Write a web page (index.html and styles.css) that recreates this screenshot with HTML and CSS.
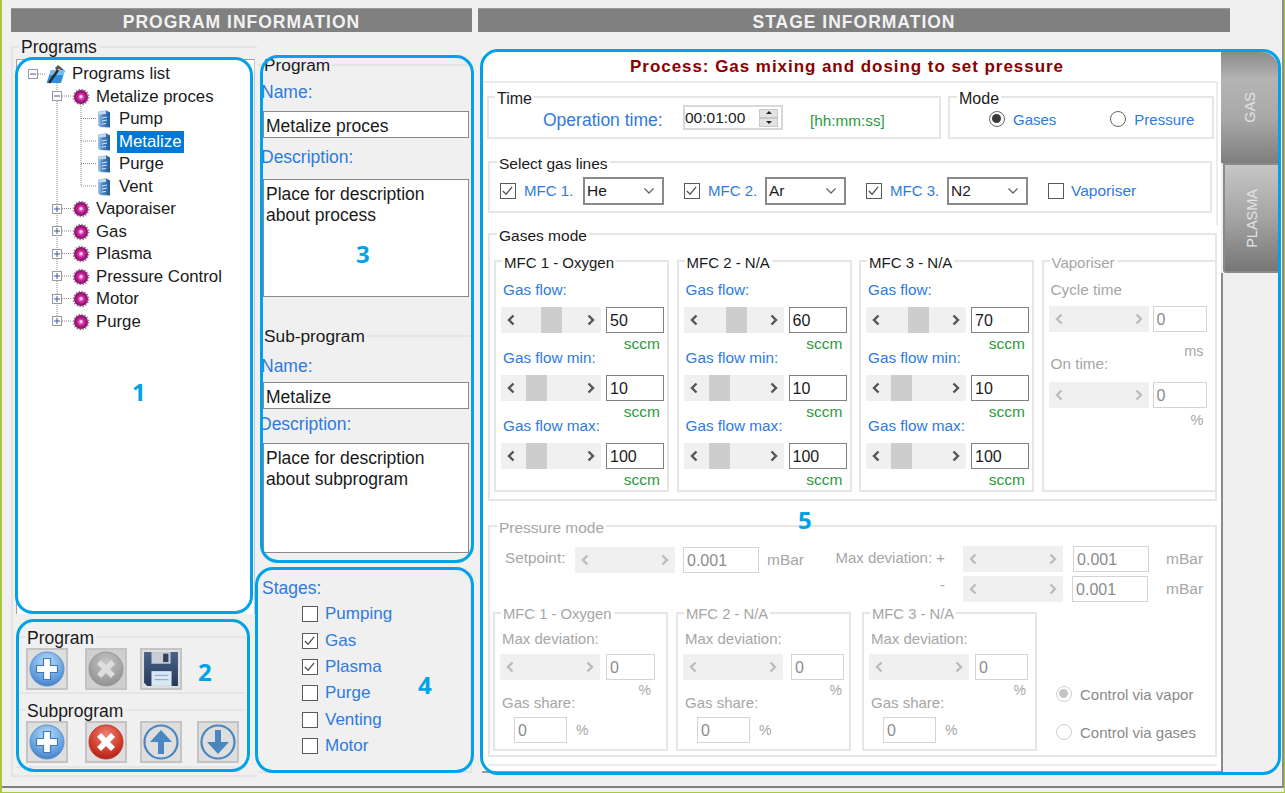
FILE: index.html

```html
<!DOCTYPE html>
<html lang="en">
<head>
    <meta charset="UTF-8">
    <title>Program information</title>
    <link rel="stylesheet" href="styles.css">
</head>
<body>

<svg class="defs" width="0" height="0">
    <defs>
        <radialGradient id="gBlue" cx="50%" cy="30%" r="75%">
            <stop offset="0" stop-color="#bcdcf8"/><stop offset="0.6" stop-color="#6fa8e0"/><stop offset="1" stop-color="#3c78c4"/>
        </radialGradient>
        <radialGradient id="gGrey" cx="50%" cy="30%" r="75%">
            <stop offset="0" stop-color="#c4c4c4"/><stop offset="1" stop-color="#8e8e8e"/>
        </radialGradient>
        <radialGradient id="gRed" cx="50%" cy="30%" r="75%">
            <stop offset="0" stop-color="#ee8474"/><stop offset="0.6" stop-color="#d2402f"/><stop offset="1" stop-color="#a81c14"/>
        </radialGradient>
        <radialGradient id="gGear" cx="50%" cy="50%" r="55%">
            <stop offset="0" stop-color="#f8a8d8"/><stop offset="0.45" stop-color="#c8209a"/><stop offset="1" stop-color="#6c0c50"/>
        </radialGradient>
        <linearGradient id="gDoc" x1="0" y1="0" x2="1" y2="0">
            <stop offset="0" stop-color="#a9c8ea"/><stop offset="0.4" stop-color="#4a86c6"/><stop offset="1" stop-color="#1f5a9e"/>
        </linearGradient>
        <linearGradient id="gFloppy" x1="0" y1="0" x2="0" y2="1">
            <stop offset="0" stop-color="#4a6288"/><stop offset="1" stop-color="#27395c"/>
        </linearGradient>

        <symbol id="i-gear" viewBox="0 0 18 18">
            <circle cx="9" cy="9" r="7.6" fill="none" stroke="#8a7a86" stroke-width="1.4" stroke-dasharray="1.4 1.6"/>
            <circle cx="9" cy="9" r="7" fill="url(#gGear)"/>
            <circle cx="9" cy="8.4" r="1.5" fill="#fbd0ea"/>
        </symbol>
        <symbol id="i-doc" viewBox="0 0 14 18">
            <path d="M1 1.5 L9.5 0.5 L13 2.5 L13 17.5 L3 17 L1 15.5 Z" fill="url(#gDoc)"/>
            <path d="M2 1.5 L9 1 L9 4 L2 4.5 Z" fill="#c4d8f0"/>
            <path d="M5 8 L10 7 M5 11 L10 10 M5 14 L9 13.5" stroke="#d6e6f6" stroke-width="1" fill="none"/>
        </symbol>
        <symbol id="i-root" viewBox="0 0 20 20">
            <path d="M5 6 L19 6 L15 19 L0.5 19 Z" fill="#2f8fe0"/>
            <path d="M5 6 L19 6 L17.5 11 L3 11 Z" fill="#74bdf2"/>
            <path d="M3 19 L12 6" stroke="#2a2a2a" stroke-width="2.4"/>
            <path d="M9 4 L12 1 L18 6 L15 6 L12 5 L11 7 Z" fill="#555"/>
        </symbol>
        <symbol id="i-plus" viewBox="0 0 36 36">
            <circle cx="18" cy="18" r="17" fill="url(#gBlue)" stroke="#5a94d4" stroke-width="1"/>
            <path d="M14.5 7.5 H21.5 V14.5 H28.5 V21.5 H21.5 V28.5 H14.5 V21.5 H7.5 V14.5 H14.5 Z" fill="#fff" stroke="#3f78bc" stroke-width="1.2"/>
        </symbol>
        <symbol id="i-cross-off" viewBox="0 0 36 36">
            <circle cx="18" cy="18" r="17" fill="url(#gGrey)" stroke="#9a9a9a" stroke-width="1"/>
            <path d="M13 9 L18 14 L23 9 L27 13 L22 18 L27 23 L23 27 L18 22 L13 27 L9 23 L14 18 L9 13 Z" fill="#dedede"/>
        </symbol>
        <symbol id="i-cross" viewBox="0 0 36 36">
            <circle cx="18" cy="18" r="17" fill="url(#gRed)" stroke="#c03a2c" stroke-width="1"/>
            <path d="M13 9 L18 14 L23 9 L27 13 L22 18 L27 23 L23 27 L18 22 L13 27 L9 23 L14 18 L9 13 Z" fill="#fff"/>
        </symbol>
        <symbol id="i-floppy" viewBox="0 0 34 34">
            <path d="M1 1 H33 V33 H4 L1 30 Z" fill="url(#gFloppy)"/>
            <rect x="8" y="1" width="18" height="11" fill="#c9ced6"/>
            <rect x="19" y="2.5" width="5" height="8" fill="#33425e"/>
            <rect x="8" y="19" width="19" height="14" fill="#dbe8f4"/>
            <path d="M11 23 H24 M11 27 H24" stroke="#8fb0d0" stroke-width="1.2"/>
        </symbol>
        <symbol id="i-up" viewBox="0 0 36 36">
            <circle cx="18" cy="18" r="16.5" fill="none" stroke="#4a86c0" stroke-width="2.2"/>
            <path d="M18 6 L29 18 H21 V30 H15 V18 H7 Z" fill="#4a86c0"/>
        </symbol>
        <symbol id="i-down" viewBox="0 0 36 36">
            <circle cx="18" cy="18" r="16.5" fill="none" stroke="#4a86c0" stroke-width="2.2"/>
            <path d="M18 30 L29 18 H21 V6 H15 V18 H7 Z" fill="#4a86c0"/>
        </symbol>
        <symbol id="i-tick" viewBox="0 0 14 14">
            <path d="M2 7.5 L5.5 11 L12 3" fill="none" stroke="#555" stroke-width="1.4"/>
        </symbol>
        <symbol id="i-chev" viewBox="0 0 12 8">
            <path d="M1.5 1.5 L6 6 L10.5 1.5" fill="none" stroke="#666" stroke-width="1.3"/>
        </symbol>
        <symbol id="i-left" viewBox="0 0 8 12">
            <path d="M6.5 1.5 L2 6 L6.5 10.5" fill="none" stroke="currentColor" stroke-width="2.4"/>
        </symbol>
        <symbol id="i-right" viewBox="0 0 8 12">
            <path d="M1.5 1.5 L6 6 L1.5 10.5" fill="none" stroke="currentColor" stroke-width="2.4"/>
        </symbol>
    </defs>
</svg>

<div class="window">
<div class="frame">

    <div class="heads">
        <h2 class="head">PROGRAM INFORMATION</h2>
        <h2 class="head">STAGE INFORMATION</h2>
    </div>

    <div class="main">

        <div class="left">
            <fieldset class="programs">
                <legend>Programs</legend>
                <div class="tree">
                    <svg class="tree-lines" width="120" height="300">
                        <g fill="none" stroke="#8a8a8a" stroke-dasharray="1 1">
                            <path d="M22 15 H30 M41 20 V262 M46 37 H56 M65 47 V127 M65 59.5 H80 M65 82 H80 M65 104.5 H80 M65 127 H80"/>
                            <path d="M46 149.5 H56 M46 172 H56 M46 194.5 H56 M46 217 H56 M46 239.5 H56 M46 262 H56"/>
                        </g>
                        <g fill="#fff" stroke="#9a9a9a">
                            <rect x="12.5" y="10.5" width="9" height="9"/>
                            <rect x="36.5" y="32.5" width="9" height="9"/>
                            <rect x="36.5" y="145.5" width="9" height="9"/>
                            <rect x="36.5" y="167.5" width="9" height="9"/>
                            <rect x="36.5" y="190.5" width="9" height="9"/>
                            <rect x="36.5" y="212.5" width="9" height="9"/>
                            <rect x="36.5" y="235.5" width="9" height="9"/>
                            <rect x="36.5" y="257.5" width="9" height="9"/>
                        </g>
                        <path d="M14 15 H20 M38 37 H44" stroke="#3c5a9a"/>
                        <path d="M38 150 H44 M41 147 V153 M38 172 H44 M41 169 V175 M38 195 H44 M41 192 V198 M38 217 H44 M41 214 V220 M38 240 H44 M41 237 V243 M38 262 H44 M41 259 V265" stroke="#3c5a9a"/>
                    </svg>
                    <div class="node lvl0"><svg class="ico"><use href="#i-root"/></svg><span>Programs list</span></div>
                    <div class="node lvl1"><svg class="ico"><use href="#i-gear"/></svg><span>Metalize proces</span></div>
                    <div class="node lvl2"><svg class="ico"><use href="#i-doc"/></svg><span>Pump</span></div>
                    <div class="node lvl2"><svg class="ico"><use href="#i-doc"/></svg><span class="selected">Metalize</span></div>
                    <div class="node lvl2"><svg class="ico"><use href="#i-doc"/></svg><span>Purge</span></div>
                    <div class="node lvl2"><svg class="ico"><use href="#i-doc"/></svg><span>Vent</span></div>
                    <div class="node lvl1"><svg class="ico"><use href="#i-gear"/></svg><span>Vaporaiser</span></div>
                    <div class="node lvl1"><svg class="ico"><use href="#i-gear"/></svg><span>Gas</span></div>
                    <div class="node lvl1"><svg class="ico"><use href="#i-gear"/></svg><span>Plasma</span></div>
                    <div class="node lvl1"><svg class="ico"><use href="#i-gear"/></svg><span>Pressure Control</span></div>
                    <div class="node lvl1"><svg class="ico"><use href="#i-gear"/></svg><span>Motor</span></div>
                    <div class="node lvl1"><svg class="ico"><use href="#i-gear"/></svg><span>Purge</span></div>
                </div>

                <fieldset class="tools first">
                    <legend>Program</legend>
                    <div class="tool-row">
                        <button class="tool"><svg><use href="#i-plus"/></svg></button>
                        <button class="tool off"><svg><use href="#i-cross-off"/></svg></button>
                        <button class="tool"><svg><use href="#i-floppy"/></svg></button>
                    </div>
                </fieldset>
                <fieldset class="tools">
                    <legend>Subprogram</legend>
                    <div class="tool-row">
                        <button class="tool"><svg><use href="#i-plus"/></svg></button>
                        <button class="tool"><svg><use href="#i-cross"/></svg></button>
                        <button class="tool"><svg><use href="#i-up"/></svg></button>
                        <button class="tool"><svg><use href="#i-down"/></svg></button>
                    </div>
                </fieldset>
            </fieldset>
        </div>

        <div class="mid">
            <fieldset class="info">
                <legend>Program</legend>
                <div class="lbl name">Name:</div>
                <input class="field" type="text" value="Metalize proces">
                <div class="lbl desc">Description:</div>
                <textarea class="memo">Place for description about process</textarea>
            </fieldset>
            <fieldset class="info sub">
                <legend>Sub-program</legend>
                <div class="lbl name">Name:</div>
                <input class="field" type="text" value="Metalize">
                <div class="lbl desc shifted">Description:</div>
                <textarea class="memo short">Place for description about subprogram</textarea>
            </fieldset>
            <div class="stages">
                <div class="lbl">Stages:</div>
                <ul class="stage-list">
                    <li><span class="check"></span>Pumping</li>
                    <li><span class="check"><svg><use href="#i-tick"/></svg></span>Gas</li>
                    <li><span class="check"><svg><use href="#i-tick"/></svg></span>Plasma</li>
                    <li><span class="check"></span>Purge</li>
                    <li><span class="check"></span>Venting</li>
                    <li><span class="check"></span>Motor</li>
                </ul>
            </div>
        </div>

        <div class="stage-wrap">
            <div class="stage">
                <div class="title">Process: Gas mixing and dosing to set pressure</div>
                <div class="stage-top">
                    <div class="top-row">
                        <fieldset class="box time">
                            <legend>Time</legend>
                            <div class="time-row">
                                <span class="lbl op">Operation time:</span>
                                <div class="spin">
                                    <span>00:01:00</span>
                                    <div class="spin-btns"><i class="up"></i><i class="dn"></i></div>
                                </div>
                                <span class="hint">[hh:mm:ss]</span>
                            </div>
                        </fieldset>
                        <fieldset class="box mode">
                            <legend>Mode</legend>
                            <div class="mode-row">
                                <span class="radio on"></span><span class="lbl opt">Gases</span>
                                <span class="radio second"></span><span class="lbl opt">Pressure</span>
                            </div>
                        </fieldset>
                    </div>
                    <fieldset class="box lines">
                        <legend>Select gas lines</legend>
                        <div class="lines-row">
                            <div class="gas-line"><span class="check"><svg><use href="#i-tick"/></svg></span><span class="lbl">MFC 1.</span><div class="combo">He<svg><use href="#i-chev"/></svg></div></div>
                            <div class="gas-line"><span class="check"><svg><use href="#i-tick"/></svg></span><span class="lbl">MFC 2.</span><div class="combo">Ar<svg><use href="#i-chev"/></svg></div></div>
                            <div class="gas-line"><span class="check"><svg><use href="#i-tick"/></svg></span><span class="lbl">MFC 3.</span><div class="combo">N2<svg><use href="#i-chev"/></svg></div></div>
                            <div class="gas-line vap"><span class="check"></span><span class="lbl">Vaporiser</span></div>
                        </div>
                    </fieldset>
                </div>

                <fieldset class="box gases">
                    <legend>Gases mode</legend>
                    <div class="mfc-row">
                        <fieldset class="box mfc">
                            <legend>MFC 1 - Oxygen</legend>
                            <div class="ctl"><div class="lbl">Gas flow:</div><div class="ctl-row"><div class="scroll"><svg class="arr"><use href="#i-left"/></svg><b style="left:40px"></b><svg class="arr"><use href="#i-right"/></svg></div><input class="val" value="50"></div><div class="unit">sccm</div></div>
                            <div class="ctl"><div class="lbl">Gas flow min:</div><div class="ctl-row"><div class="scroll"><svg class="arr"><use href="#i-left"/></svg><b style="left:25px"></b><svg class="arr"><use href="#i-right"/></svg></div><input class="val" value="10"></div><div class="unit">sccm</div></div>
                            <div class="ctl"><div class="lbl">Gas flow max:</div><div class="ctl-row"><div class="scroll"><svg class="arr"><use href="#i-left"/></svg><b style="left:25px"></b><svg class="arr"><use href="#i-right"/></svg></div><input class="val" value="100"></div><div class="unit">sccm</div></div>
                        </fieldset>
                        <fieldset class="box mfc">
                            <legend>MFC 2 - N/A</legend>
                            <div class="ctl"><div class="lbl">Gas flow:</div><div class="ctl-row"><div class="scroll"><svg class="arr"><use href="#i-left"/></svg><b style="left:42px"></b><svg class="arr"><use href="#i-right"/></svg></div><input class="val" value="60"></div><div class="unit">sccm</div></div>
                            <div class="ctl"><div class="lbl">Gas flow min:</div><div class="ctl-row"><div class="scroll"><svg class="arr"><use href="#i-left"/></svg><b style="left:25px"></b><svg class="arr"><use href="#i-right"/></svg></div><input class="val" value="10"></div><div class="unit">sccm</div></div>
                            <div class="ctl"><div class="lbl">Gas flow max:</div><div class="ctl-row"><div class="scroll"><svg class="arr"><use href="#i-left"/></svg><b style="left:25px"></b><svg class="arr"><use href="#i-right"/></svg></div><input class="val" value="100"></div><div class="unit">sccm</div></div>
                        </fieldset>
                        <fieldset class="box mfc">
                            <legend>MFC 3 - N/A</legend>
                            <div class="ctl"><div class="lbl">Gas flow:</div><div class="ctl-row"><div class="scroll"><svg class="arr"><use href="#i-left"/></svg><b style="left:42px"></b><svg class="arr"><use href="#i-right"/></svg></div><input class="val" value="70"></div><div class="unit">sccm</div></div>
                            <div class="ctl"><div class="lbl">Gas flow min:</div><div class="ctl-row"><div class="scroll"><svg class="arr"><use href="#i-left"/></svg><b style="left:25px"></b><svg class="arr"><use href="#i-right"/></svg></div><input class="val" value="10"></div><div class="unit">sccm</div></div>
                            <div class="ctl"><div class="lbl">Gas flow max:</div><div class="ctl-row"><div class="scroll"><svg class="arr"><use href="#i-left"/></svg><b style="left:25px"></b><svg class="arr"><use href="#i-right"/></svg></div><input class="val" value="100"></div><div class="unit">sccm</div></div>
                        </fieldset>
                        <fieldset class="box mfc vaporiser off">
                            <legend>Vaporiser</legend>
                            <div class="ctl tall"><div class="lbl">Cycle time</div><div class="ctl-row"><div class="scroll"><svg class="arr"><use href="#i-left"/></svg><svg class="arr"><use href="#i-right"/></svg></div><input class="val" value="0"></div><div class="unit low">ms</div></div>
                            <div class="ctl"><div class="lbl">On time:</div><div class="ctl-row"><div class="scroll"><svg class="arr"><use href="#i-left"/></svg><svg class="arr"><use href="#i-right"/></svg></div><input class="val" value="0"></div><div class="unit">%</div></div>
                        </fieldset>
                    </div>
                </fieldset>

                <fieldset class="box pressure off">
                    <legend>Pressure mode</legend>
                    <div class="press-top">
                        <div class="press-set">
                            <span class="set-lbl">Setpoint:</span>
                            <div class="scroll"><svg class="arr"><use href="#i-left"/></svg><svg class="arr"><use href="#i-right"/></svg></div>
                            <input class="val wide" value="0.001">
                            <span class="mbar">mBar</span>
                        </div>
                        <div class="press-dev">
                            <div class="dev-line"><span class="dev-lbl">Max deviation: +</span><div class="scroll"><svg class="arr"><use href="#i-left"/></svg><svg class="arr"><use href="#i-right"/></svg></div><input class="val wide" value="0.001"><span class="mbar">mBar</span></div>
                            <div class="dev-line minus"><span class="dev-lbl">-</span><div class="scroll"><svg class="arr"><use href="#i-left"/></svg><svg class="arr"><use href="#i-right"/></svg></div><input class="val wide" value="0.001"><span class="mbar">mBar</span></div>
                        </div>
                    </div>
                    <div class="press-groups">
                        <fieldset class="box pmfc">
                            <legend>MFC 1 - Oxygen</legend>
                            <div class="lbl">Max deviation:</div>
                            <div class="ctl-row"><div class="scroll"><svg class="arr"><use href="#i-left"/></svg><svg class="arr"><use href="#i-right"/></svg></div><input class="val small" value="0"></div>
                            <div class="pct">%</div>
                            <div class="lbl">Gas share:</div>
                            <div class="share"><input class="val small" value="0"><span>%</span></div>
                        </fieldset>
                        <fieldset class="box pmfc">
                            <legend>MFC 2 - N/A</legend>
                            <div class="lbl">Max deviation:</div>
                            <div class="ctl-row"><div class="scroll"><svg class="arr"><use href="#i-left"/></svg><svg class="arr"><use href="#i-right"/></svg></div><input class="val small" value="0"></div>
                            <div class="pct">%</div>
                            <div class="lbl">Gas share:</div>
                            <div class="share"><input class="val small" value="0"><span>%</span></div>
                        </fieldset>
                        <fieldset class="box pmfc">
                            <legend>MFC 3 - N/A</legend>
                            <div class="lbl">Max deviation:</div>
                            <div class="ctl-row"><div class="scroll"><svg class="arr"><use href="#i-left"/></svg><svg class="arr"><use href="#i-right"/></svg></div><input class="val small" value="0"></div>
                            <div class="pct">%</div>
                            <div class="lbl">Gas share:</div>
                            <div class="share"><input class="val small" value="0"><span>%</span></div>
                        </fieldset>
                        <div class="controls">
                            <div class="ctrl"><span class="radio on"></span>Control via vapor</div>
                            <div class="ctrl"><span class="radio"></span>Control via gases</div>
                        </div>
                    </div>
                </fieldset>
                <div class="stage-end"></div>
            </div>

            <div class="tabs">
                <div class="tab gas"><span>GAS</span></div>
                <div class="tab plasma"><span>PLASMA</span></div>
                <div class="tab-rest"></div>
            </div>
        </div>
    </div>

    <!-- numbered callouts drawn over the screen -->
    <div class="callout c1"></div><div class="callout c2"></div><div class="callout c3"></div><div class="callout c4"></div><div class="callout c5"></div>
    <span class="num n1">1</span><span class="num n2">2</span><span class="num n3">3</span><span class="num n4">4</span><span class="num n5">5</span>

</div>
</div>

</body>
</html>
```

FILE: styles.css

```css
* {
    box-sizing: border-box;
}
html, body {
    margin: 0;
    padding: 0;
}
body {
    width: 1285px;
    height: 793px;
    overflow: hidden;
    background: #f0f0f0;
    font-family: "Liberation Sans", Arial, sans-serif;
    font-size: 15px;
    color: #1a1a1a;
}
.defs {
    position: absolute;
}
.window {
    height: 793px;
    border-left: 2px solid #a8c83e;
    border-right: 1px solid #a8c83e;
    border-bottom: 1px solid #a8c83e;
}
.frame {
    position: relative;
    height: 788px;
    border-right: 2px solid #8c8c8c;
    border-bottom: 2px solid #808080;
}
fieldset {
    margin: 0;
    padding: 0;
    min-width: 0;
}
legend {
    padding: 0 2px;
    height: 18px;
    line-height: 18px;
}

/* headers */
.heads {
    display: flex;
    gap: 6px;
    padding: 8px 0 0 9px;
}
.head {
    margin: 0;
    height: 24px;
    line-height: 27px;
    background: #808080;
    border-top: 1px solid #999;
    color: #f2f2f2;
    font-size: 17.5px;
    letter-spacing: 1px;
    text-align: center;
    overflow: hidden;
}
.head:first-child {
    width: 461px;
}
.head:last-child {
    width: 752px;
}

.main {
    display: flex;
    padding-left: 9px;
}

/* left column */
.left {
    width: 246px;
    margin-top: 6px;
    margin-right: 1px;
}
.programs {
    height: 739px;
    border: 2px solid #e4e4e4;
    border-right: 0;
    padding-left: 3px;
}
.programs > legend {
    margin-left: 3px;
    font-size: 17.5px;
}
.tree {
    position: relative;
    width: 239px;
    height: 555px;
    margin-top: 3px;
    padding-top: 3px;
    background: #fff;
    border-top: 1px solid #a0a0a0;
    border-left: 1px solid #a0a0a0;
    border-right: 1px solid #c8c8c8;
    font-size: 16.8px;
}
.tree-lines {
    position: absolute;
    left: -1px;
    top: -1px;
}
.node {
    position: relative;
    display: flex;
    align-items: center;
    height: 22.5px;
}
.lvl0 { padding-left: 29px; }
.lvl1 { padding-left: 55px; }
.lvl2 { padding-left: 80px; }
.ico {
    width: 18px;
    height: 18px;
    flex: none;
}
.lvl0 .ico { width: 20px; height: 20px; }
.lvl0 span { margin-left: 6px; }
.lvl1 span { margin-left: 6px; }
.lvl2 .ico { width: 14px; }
.lvl2 span { margin-left: 6px; padding: 0 2px; line-height: 22px; }
.selected {
    background: #0078d7;
    color: #fff;
}
.tools {
    width: 230px;
    border: 0;
    border-top: 2px solid #e6e6e6;
}
.tools > legend {
    margin-left: 9px;
    font-size: 17.5px;
    line-height: 20px;
}
.tools.first {
    margin-top: 14px;
    height: 66px;
    border-bottom: 2px solid #e6e6e6;
}
.tools:not(.first) {
    margin-top: 7px;
    height: 67px;
    border-bottom: 2px solid #e6e6e6;
}
.tool-row {
    display: flex;
    padding-left: 10px;
    margin-top: 2px;
}
.tool {
    display: flex;
    align-items: center;
    justify-content: center;
    width: 42px;
    height: 42px;
    padding: 0;
    background: #dedede;
    border: 2px solid #c4c4c4;
}
.tool.off {
    background: #cfcfcf;
}
.tool svg {
    width: 36px;
    height: 36px;
}
.tool:nth-child(2) { margin-left: 17px; }
.tool:nth-child(3) { margin-left: 13px; }
.tool:nth-child(4) { margin-left: 15px; }

/* middle column */
.mid {
    width: 214px;
    margin-top: 24px;
}
.lbl {
    color: #2f7ade;
    font-size: 15.5px;
    line-height: 18px;
}
.mid .lbl {
    font-size: 17.5px;
}
.info {
    height: 260px;
    border: 0;
    border-top: 2px solid #e4e4e4;
}
.info > legend {
    margin-left: 4px;
    font-size: 17.3px;
}
.info .lbl.name {
    margin: 9px 0 0 3px;
}
.info .lbl.desc {
    margin: 10px 0 0 3px;
}
.field {
    display: block;
    width: 206px;
    height: 27px;
    margin: 10px 0 0 5px;
    padding: 3px 2px 0;
    border: 1px solid #8a8a8a;
    background: #fff;
    font: 17.5px "Liberation Sans", Arial, sans-serif;
    color: #1a1a1a;
}
.memo {
    display: block;
    width: 206px;
    height: 118px;
    margin: 13px 0 0 5px;
    padding: 4px 30px 4px 2px;
    border: 1px solid #8a8a8a;
    background: #fff;
    resize: none;
    overflow: hidden;
    font: 17.5px/21px "Liberation Sans", Arial, sans-serif;
    color: #1a1a1a;
}
.sub {
    height: 244px;
    margin-top: 11px;
}
.sub .lbl.name {
    margin-top: 12px;
}
.sub .field {
    margin-top: 7px;
}
.sub .lbl.desc {
    margin-top: 6px;
}
.sub .lbl.shifted {
    margin-left: 1px;
}
.memo.short {
    height: 110px;
    margin-top: 10px;
}
.stages {
    height: 202px;
    padding: 8px 0 0 4px;
    border: 2px solid #e4e4e4;
    border-top: 0;
    border-left: 0;
}
.stage-list {
    list-style: none;
    margin: 4px 0 0;
    padding: 0 0 0 40px;
}
.stage-list li {
    display: flex;
    align-items: center;
    gap: 7px;
    height: 26.4px;
    color: #2f7ade;
    font-size: 17px;
}
.check {
    display: inline-flex;
    flex: none;
    width: 16px;
    height: 16px;
    background: #fff;
    border: 1.5px solid #5a5a5a;
}
.check svg {
    width: 13px;
    height: 13px;
}

/* stage panel */
.stage-wrap {
    display: flex;
    width: 798px;
    height: 721px;
    margin: 20px 0 0 10px;
}
.stage {
    width: 739px;
    background: #fff;
    border-bottom: 2px solid #9a9a9a;
}
.title {
    width: 736px;
    height: 31px;
    padding-right: 6px;
    line-height: 29px;
    border-bottom: 2px solid #ececec;
    color: #8b0000;
    font-size: 17px;
    font-weight: bold;
    letter-spacing: 0.95px;
    text-align: center;
}
.box {
    border: 2px solid #e6e6e6;
}
.box > legend {
    font-size: 15.5px;
    line-height: 21px;
}
.stage-top {
    width: 736px;
    height: 142px;
    padding: 5px 0 0 5px;
    border-right: 2px solid #ececec;
}
.top-row {
    display: flex;
    gap: 7px;
}
.time {
    width: 454px;
    height: 51px;
}
.time > legend,
.mode > legend {
    margin-left: 6px;
    font-size: 16px;
}
.mode > legend {
    margin-left: 7px;
}
.time-row {
    display: flex;
    align-items: center;
    margin-top: -1px;
    padding-left: 54px;
}
.lbl.op {
    width: 140px;
    padding-top: 4px;
    font-size: 17.5px;
}
.spin {
    display: flex;
    align-items: center;
    justify-content: space-between;
    width: 100px;
    height: 25px;
    padding: 0 3px 0 0;
    border: 2px solid #d8d8d8;
    font-size: 15.5px;
}
.spin > span {
    padding-top: 1px;
}
.spin-btns i {
    display: block;
    position: relative;
    width: 19px;
    height: 9px;
    background: #e4e4e4;
    border: 1px solid #c8c8c8;
}
.spin-btns i.up::after,
.spin-btns i.dn::after {
    content: "";
    position: absolute;
    left: 6px;
    border: 3px solid transparent;
}
.spin-btns i.up::after {
    top: -2px;
    border-bottom-color: #222;
}
.spin-btns i.dn::after {
    top: 2px;
    border-top-color: #222;
}
.hint {
    margin-left: 27px;
    padding-top: 6px;
    color: #2c9a3c;
    font-size: 15.3px;
}
.mode {
    width: 266px;
    height: 51px;
}
.mode-row {
    display: flex;
    align-items: center;
    padding: 3px 0 0 39px;
}
.radio {
    position: relative;
    display: inline-block;
    flex: none;
    width: 16px;
    height: 16px;
    background: #fff;
    border: 1.5px solid #666;
    border-radius: 50%;
}
.radio.on::after {
    content: "";
    position: absolute;
    left: 2px;
    top: 2px;
    width: 9px;
    height: 9px;
    background: #3a3a3a;
    border-radius: 50%;
}
.radio.second {
    margin-left: 54px;
}
.lbl.opt {
    margin-left: 8px;
    padding-top: 2px;
    font-size: 15px;
}
.lines {
    width: 724px;
    height: 60px;
    margin: 14px 0 0 1px;
}
.lines > legend {
    margin-left: 7px;
}
.lines-row {
    display: flex;
    gap: 20px;
    padding: 6px 0 0 10px;
}
.gas-line {
    display: flex;
    align-items: center;
    width: 162px;
}
.gas-line:first-child {
    width: 164px;
}
.gas-line .check {
    margin-right: 8px;
}
.gas-line .lbl {
    flex: 1;
    font-size: 15px;
    white-space: nowrap;
}
.gas-line.vap {
    width: 100px;
}
.gas-line.vap .check {
    margin-right: 7px;
}
.gas-line.vap .lbl {
    font-size: 15.5px;
}
.combo {
    display: flex;
    align-items: center;
    justify-content: space-between;
    flex: none;
    width: 81px;
    height: 28px;
    padding: 0 7px 0 2px;
    background: #fff;
    border: 2px solid #8a8a8a;
    font-size: 15.5px;
}
.combo svg {
    width: 12px;
    height: 8px;
}
.gases {
    width: 729px;
    height: 276px;
    margin-left: 6px;
}
.gases > legend {
    margin-left: 7px;
}
.mfc-row {
    display: flex;
    gap: 7.5px;
    padding: 9px 0 0 4px;
}
.mfc {
    flex: none;
    width: 175px;
    height: 240px;
    padding: 11px 0 0 5px;
}
.mfc > legend {
    margin-left: 1px;
    font-size: 15px;
}
.ctl {
    height: 68px;
}
.ctl .lbl {
    margin-left: 2px;
    font-size: 15.3px;
}
.ctl-row {
    display: flex;
    gap: 5px;
}
.ctl .ctl-row {
    margin-top: 8px;
}
.scroll {
    position: relative;
    display: flex;
    align-items: center;
    justify-content: space-between;
    flex: none;
    width: 100px;
    height: 26px;
    padding: 0 6px;
    background: #f0f0f0;
    color: #555;
}
.scroll b {
    position: absolute;
    top: 0;
    width: 21px;
    height: 26px;
    background: #cdcdcd;
}
.arr {
    width: 8px;
    height: 12px;
}
.val {
    display: block;
    width: 58px;
    height: 26px;
    padding: 2px 3px 0;
    background: #fff;
    border: 1.5px solid #808080;
    font: 16px "Liberation Sans", Arial, sans-serif;
    color: #1a1a1a;
}
.unit {
    height: 14px;
    margin-top: 4px;
    padding-right: 7px;
    line-height: 14px;
    color: #2c9a3c;
    font-size: 15.5px;
    text-align: right;
}

/* disabled parts */
.off,
.off > legend {
    color: #a6a6a6;
}
.off .lbl,
.off .unit {
    color: #a6a6a6;
}
.off .scroll {
    color: #bcbcbc;
}
.off .val {
    width: 54px;
    border-color: #d4d4d4;
    color: #8c8c8c;
}
.vaporiser .ctl.tall {
    height: 74px;
}
.vaporiser .ctl-row {
    gap: 4px;
}
.vaporiser .ctl .ctl-row {
    margin-top: 7px;
}
.vaporiser .ctl.tall + .ctl .ctl-row {
    margin-top: 9px;
}
.vaporiser .unit {
    padding-right: 11px;
    font-size: 14.5px;
}
.vaporiser .unit.low {
    margin-top: 12px;
}
.vaporiser .ctl.tall + .ctl .unit {
    padding-right: 11px;
    margin-top: 5px;
}
.pressure {
    width: 729px;
    height: 240px;
    margin: 16px 0 0 6px;
}
.pressure > legend {
    margin-left: 7px;
}
.press-top {
    display: flex;
    height: 69px;
    padding: 11px 0 0 15px;
    font-size: 15.3px;
}
.press-set {
    display: flex;
    align-items: center;
    align-self: flex-start;
    height: 26px;
    margin-top: 1px;
}
.set-lbl {
    width: 70px;
    padding-bottom: 4px;
}
.off .val.wide {
    width: 76px;
    height: 26px;
    margin-left: 8px;
}
.mbar {
    margin-left: 8px;
    font-size: 15.5px;
}
.press-dev {
    margin-left: 30px;
    display: flex;
    flex-direction: column;
    gap: 4px;
}
.dev-line {
    display: flex;
    align-items: center;
    height: 26px;
}
.dev-lbl {
    width: 129px;
    padding: 0 18px 4px 0;
    font-size: 15px;
    text-align: right;
    white-space: nowrap;
}
.minus .dev-lbl {
    padding-bottom: 10px;
}
.dev-line .val.wide {
    margin-left: 10px;
}
.minus .val.wide {
    margin-left: 9px;
}
.dev-line .mbar {
    margin-left: 17px;
}
.minus .mbar {
    margin-left: 18px;
}
.press-groups {
    display: flex;
    gap: 8px;
    padding-left: 3px;
}
.pmfc {
    flex: none;
    width: 175px;
    height: 147px;
    padding: 8px 0 0 5px;
}
.pmfc > legend {
    margin-left: 1px;
    font-size: 14.8px;
}
.pmfc .lbl {
    margin-left: 2px;
    font-size: 15px;
}
.pmfc .ctl-row {
    gap: 6px;
    margin-top: 6px;
}
.pmfc:first-child .ctl-row .val {
    width: 49px;
}
.pmfc:nth-child(2) .ctl-row {
    gap: 8px;
}
.pmfc:nth-child(3) {
    margin-left: 3px;
}
.off .val.small {
    width: 53px;
}
.pct {
    height: 14px;
    margin-top: 3px;
    margin-bottom: -3px;
    padding-right: 15px;
    text-align: right;
    line-height: 14px;
    font-size: 14px;
}
.pmfc:nth-child(2) .pct {
    padding-right: 7px;
}
.pmfc:nth-child(3) .pct {
    padding-right: 9px;
}
.share {
    display: flex;
    align-items: center;
    gap: 9px;
    margin: 5px 0 0 14px;
    font-size: 14px;
}
.controls {
    display: flex;
    flex-direction: column;
    gap: 22px;
    margin: 82px 0 0 11px;
}
.ctrl {
    display: flex;
    align-items: center;
    gap: 8px;
    height: 16px;
    color: #8a8a8a;
    font-size: 15px;
}
.ctrl .radio {
    border-color: #d0d0d0;
}
.ctrl .radio.on::after {
    background: #c4c4c4;
}
.stage-end {
    width: 729px;
    margin: 7px 0 0 6px;
    border-top: 2px solid #ececec;
}

/* tabs */
.tabs {
    display: flex;
    flex-direction: column;
    width: 59px;
}
.tab {
    display: flex;
    align-items: center;
    justify-content: center;
    color: #e2e2e2;
    font-size: 14.5px;
}
.tab span {
    writing-mode: vertical-rl;
    transform: rotate(180deg);
}
.tab.gas {
    height: 111px;
    width: 58px;
    background: linear-gradient(180deg, #8a8a8a 0, #b4b4b4 25%, #a8a8a8 60%, #7e7e7e 100%);
    border-radius: 0 18px 0 0;
}
.tab.plasma {
    width: 57px;
    height: 110px;
    margin-left: 2px;
    background: linear-gradient(180deg, #c6c6c6 0, #a4a4a4 50%, #767676 100%);
    border: 2px solid #8a8a8a;
    border-radius: 0 0 3px 3px;
}
.tab-rest {
    flex: 1;
    border-left: 2px solid #8a8a8a;
}

/* callouts */
.callout {
    position: absolute;
    border: 3px solid #00a2e8;
    border-radius: 18px;
}
.c1 { left: 13px; top: 57px; width: 238px; height: 557px; }
.c2 { left: 14px; top: 619px; width: 234px; height: 153px; }
.c3 { left: 258px; top: 55px; width: 214px; height: 508px; }
.c4 { left: 253px; top: 567px; width: 219px; height: 206px; }
.c5 { left: 478px; top: 49px; width: 801px; height: 726px; }
.num {
    position: absolute;
    color: #00a2e8;
    font-family: "Open Sans", sans-serif;
    font-size: 24px;
    font-weight: bold;
    line-height: 28px;
}
.n1 { left: 130px; top: 378px; }
.n2 { left: 196px; top: 658px; }
.n3 { left: 354px; top: 240px; }
.n4 { left: 416px; top: 671px; }
.n5 { left: 796px; top: 506px; }
```
